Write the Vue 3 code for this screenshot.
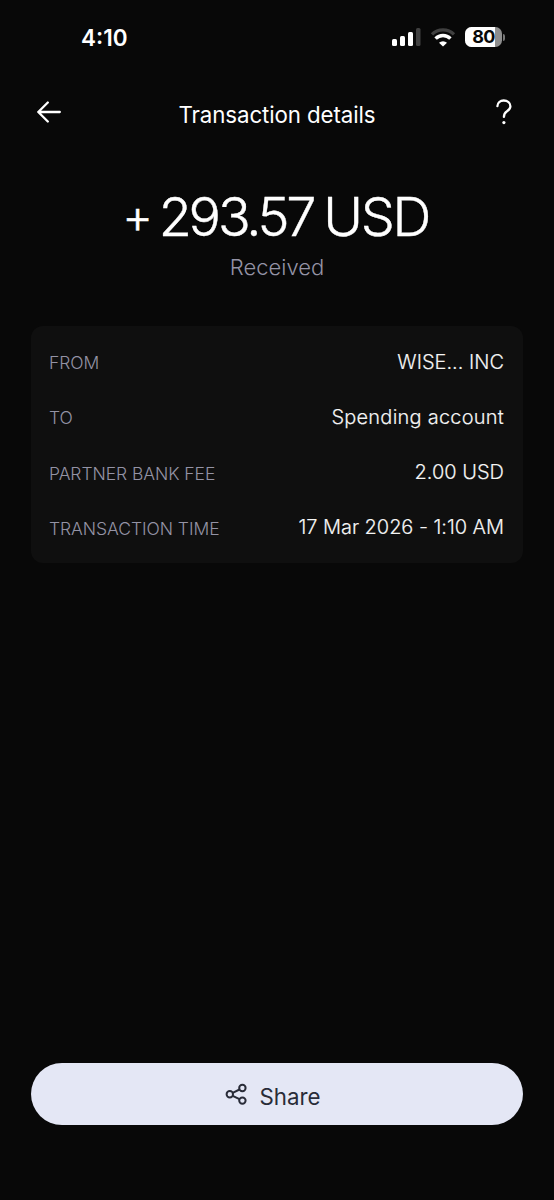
<template>
  <div class="screen">
    <div class="status-bar">
      <span class="clock">4:10</span>
      <div class="indicators">
        <svg class="signal" width="28" height="18" viewBox="0 0 28 18">
          <rect x="0" y="11" width="5" height="7" rx="1.5" fill="#fff" />
          <rect x="8" y="8" width="5" height="10" rx="1.5" fill="#fff" />
          <rect x="16" y="4" width="5" height="14" rx="1.5" fill="#fff" />
          <rect x="24" y="0" width="4.5" height="18" rx="1.5" fill="#404040" />
        </svg>
        <svg class="wifi" width="26" height="19" viewBox="0 0 26 19">
          <path d="M2 6.4 A15.6 15.6 0 0 1 24 6.4" fill="none" stroke="#404040" stroke-width="3.3" />
          <path d="M5.6 10.6 A10.4 10.4 0 0 1 20.4 10.6" fill="none" stroke="#fff" stroke-width="3.4" />
          <path d="M13 18.6 L9 14.8 A5.7 5.7 0 0 1 17 14.8 Z" fill="#fff" />
        </svg>
        <div class="battery">
          <div class="battery-body">
            <div class="battery-fill" :style="{ width: battery + '%' }"></div>
            <span class="battery-level">{{ battery }}</span>
          </div>
          <div class="battery-cap"></div>
        </div>
      </div>
    </div>

    <header class="header">
      <button class="icon-button" aria-label="Back">
        <svg width="24" height="22" viewBox="0 0 24 22" fill="none" stroke="#fff" stroke-width="2.3" stroke-linecap="round" stroke-linejoin="round">
          <path d="M22.8 11H1.3M10.8 1.5L1.3 11L10.8 20.5" />
        </svg>
      </button>
      <h1 class="title">Transaction details</h1>
      <button class="icon-button help" aria-label="Help">
        <svg width="16" height="26" viewBox="0 0 16 26" fill="none" stroke="#fff" stroke-width="2.3" stroke-linecap="round" stroke-linejoin="round">
          <path d="M1.4 7.2C1.5 3.6 4.2 1.5 7.7 1.5C11.4 1.5 14.4 3.8 14.4 7.2C14.4 9.6 13.1 10.9 11 12.2C8.8 13.6 7.9 14.7 7.9 17.9" />
          <circle cx="7.9" cy="23.6" r="1.6" fill="#fff" stroke="none" />
        </svg>
      </button>
    </header>

    <section class="summary">
      <div class="amount">
        <span class="sign">+</span>
        <span class="number">293.57</span>
        <span class="currency">USD</span>
      </div>
      <div class="status">Received</div>
    </section>

    <dl class="details">
      <div v-for="row in rows" :key="row.key" class="row">
        <dt class="label" :class="row.key">{{ row.label }}</dt>
        <dd class="value" :class="row.key">{{ row.value }}</dd>
      </div>
    </dl>

    <button class="share">
      <svg width="22" height="22" viewBox="0 0 22 22" fill="none" stroke="#292c38" stroke-width="2">
        <circle cx="4.8" cy="11.3" r="3.2" />
        <circle cx="17.4" cy="5" r="3.2" />
        <circle cx="17.4" cy="17.6" r="3.2" />
        <path d="M7.7 9.8L14.5 6.5M7.7 12.8L14.5 16.2" />
      </svg>
      <span class="share-text">Share</span>
    </button>
  </div>
</template>

<script setup>
import { ref } from 'vue';

const battery = ref(80);

const rows = [
  { key: 'from', label: 'FROM', value: 'WISE... INC' },
  { key: 'to', label: 'TO', value: 'Spending account' },
  { key: 'fee', label: 'PARTNER BANK FEE', value: '2.00 USD' },
  { key: 'time', label: 'TRANSACTION TIME', value: '17 Mar 2026 - 1:10 AM' }
];
</script>

<style>
body {
  margin: 0;
  background: #080808;
}
</style>

<style scoped>
.screen {
  display: flex;
  flex-direction: column;
  box-sizing: border-box;
  width: 554px;
  height: 1200px;
  padding: 0 31px 75px;
  background: #080808;
  color: #fff;
  font-family: Inter, "Liberation Sans", sans-serif;
  overflow: hidden;
}

button {
  padding: 0;
  border: none;
  background: none;
  font-family: inherit;
}

.status-bar {
  display: flex;
  align-items: center;
  justify-content: space-between;
  height: 74px;
  padding: 0 18px 0 50px;
}

.clock {
  font-size: 22.5px;
  font-weight: 600;
  line-height: 26px;
  letter-spacing: 0;
  padding-top: 1px;
}

.indicators {
  display: flex;
  align-items: center;
}

.signal {
  margin-right: 10px;
  overflow: visible;
}

.wifi {
  margin-right: 9px;
}

.battery {
  display: flex;
  align-items: center;
  gap: 1px;
}

.battery-body {
  position: relative;
  width: 37px;
  height: 20px;
  border-radius: 6.5px;
  background: #8e8e8e;
  overflow: hidden;
}

.battery-fill {
  height: 100%;
  background: #fff;
}

.battery-level {
  position: absolute;
  inset: 0;
  color: #080808;
  font-size: 18px;
  font-weight: 700;
  line-height: 20px;
  text-align: center;
  letter-spacing: -0.8px;
}

.battery-cap {
  width: 2px;
  height: 7px;
  border-radius: 0 3px 3px 0;
  background: #777;
}

.header {
  display: flex;
  align-items: center;
  justify-content: space-between;
  height: 76px;
}

.icon-button {
  display: flex;
  align-items: center;
  justify-content: center;
  width: 36px;
  height: 36px;
}

.help {
  padding-right: 2px;
}

.title {
  margin: 5px 0 0;
  font-size: 22.3px;
  font-weight: 400;
  line-height: 28px;
  letter-spacing: -0.1px;
}

.summary {
  display: flex;
  flex-direction: column;
  align-items: center;
  height: 175.5px;
  box-sizing: border-box;
  padding-top: 35px;
}

.amount {
  display: flex;
  padding-right: 3px;
  font-size: 54px;
  font-weight: 350;
  line-height: 64px;
  letter-spacing: -3.2px;
  -webkit-text-stroke: 0.4px #fff;
}

.sign {
  margin-right: 9px;
  font-size: 47px;
  line-height: 61px;
}

.number {
  margin-right: 10px;
}

.currency {
  letter-spacing: -2.4px;
}

.status {
  margin-top: 4px;
  color: #9493a5;
  font-size: 22px;
  font-weight: 350;
  line-height: 28px;
}

.details {
  display: flex;
  flex-direction: column;
  justify-content: space-between;
  box-sizing: border-box;
  height: 237px;
  margin: 0;
  padding: 22px 19px 21px 18px;
  border-radius: 12px;
  background: #0f0f0f;
}

.row {
  display: flex;
  align-items: center;
  justify-content: space-between;
  height: 28px;
}

.label {
  padding-top: 2px;
  color: #9493a5;
  font-size: 17.5px;
  font-weight: 350;
  letter-spacing: -0.06px;
}

.value {
  margin: 0;
  color: #f5f5f5;
  font-size: 20px;
  font-weight: 350;
  -webkit-text-stroke: 0.15px #f5f5f5;
}

.value.to {
  letter-spacing: 0.23px;
}

.value.time {
  letter-spacing: -0.05px;
}

.share {
  display: flex;
  align-items: center;
  justify-content: center;
  gap: 12px;
  height: 62px;
  margin-top: auto;
  padding-right: 8px;
  border-radius: 31px;
  background: #e4e7f5;
  color: #292c38;
}

.share-text {
  padding-top: 5px;
  font-size: 22.3px;
  line-height: 28px;
}
</style>
